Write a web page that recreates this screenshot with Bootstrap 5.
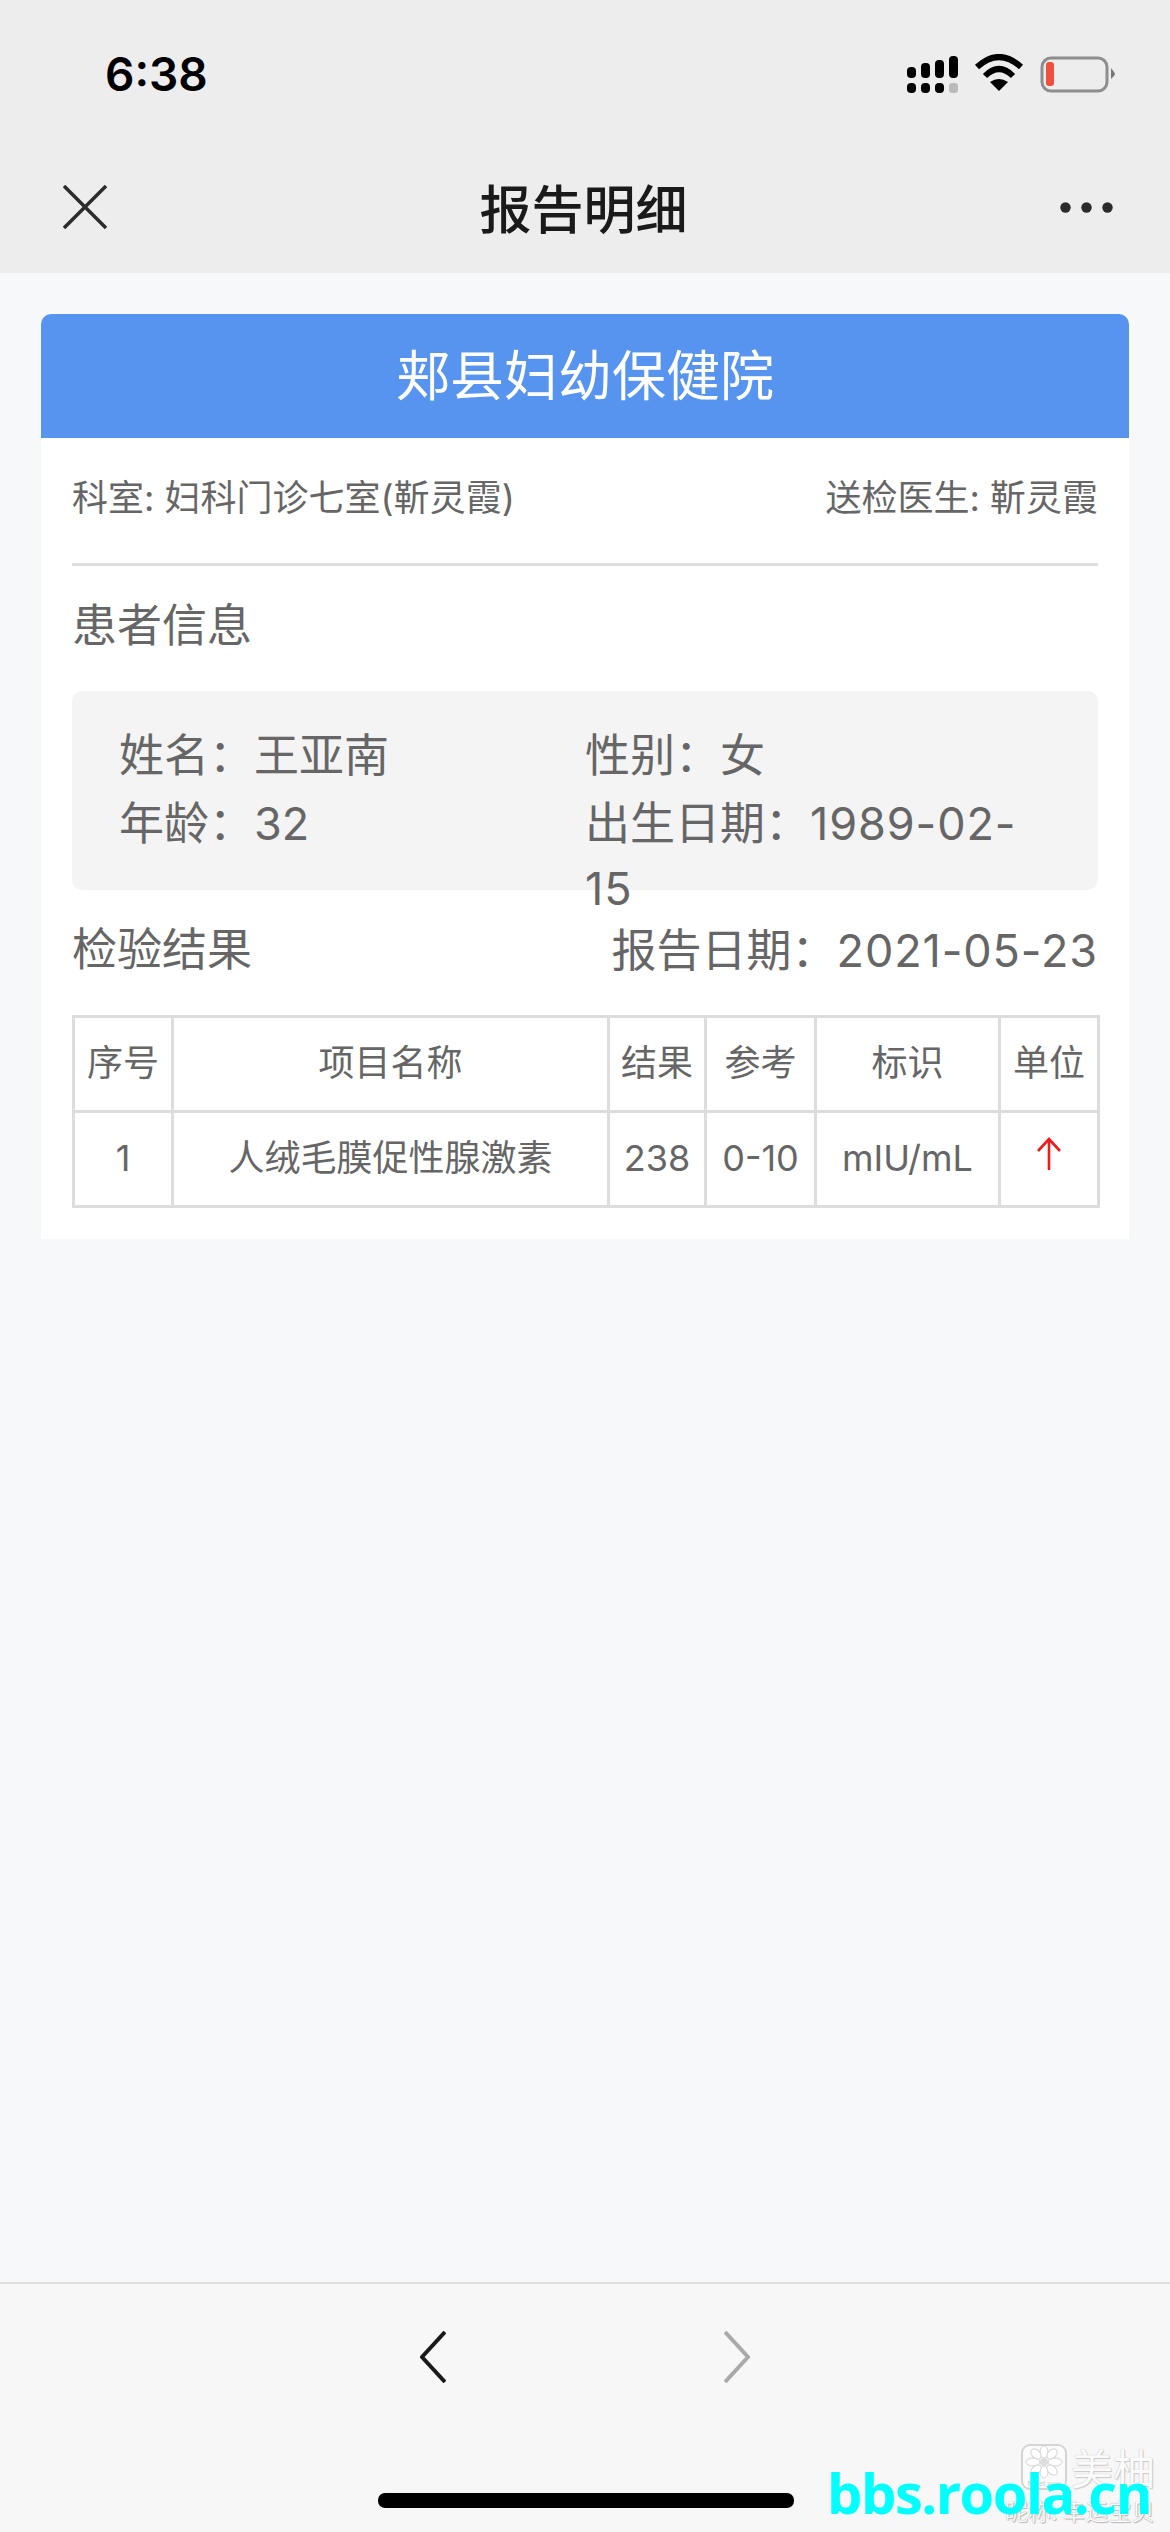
<!DOCTYPE html>
<html lang="zh-CN">
<head>
    <meta charset="UTF-8">
    <meta name="viewport" content="width=device-width, initial-scale=1.0">
    <title>报告明细</title>
    <link href="https://cdn.jsdelivr.net/npm/bootstrap@5.3.0/dist/css/bootstrap.min.css" rel="stylesheet">
    <style>
        body {
            width: 1170px;
            height: 2532px;
            overflow: hidden;
            background: #f7f8fa;
            color: #666;
            font-family: Inter, "Noto Sans CJK SC", sans-serif;
        }
        .app-top { height: 273px; background: #ededed; flex: none; }
        .status-row { height: 148px; padding: 0 55px 0 105px; }
        .status-time { font-size: 46px; font-weight: 600; color: #000; line-height: 1; }
        .nav-row { height: 125px; padding: 0 57px 7px 63px; }
        .nav-title { font-size: 52px; font-weight: 500; color: #1a1a1a; line-height: 1; font-family: "Noto Sans CJK SC", sans-serif; }
        .report-wrap { padding: 41px 41px 0; }
        .report-card { border: 0; border-radius: 10px 10px 0 0; height: 925px; }
        .report-head { height: 124px; background: #5794f0; color: #fff; font-size: 54px; border: 0; padding: 0; border-radius: 10px 10px 0 0 !important; }
        .report-body { padding: 0 31px; }
        .dept-row { border-bottom: 3px solid #ddd; box-sizing: content-box; padding-bottom: 6px; height: 119px; font-size: 36px; }
        .sect-title { font-size: 45px; line-height: 1; }
        .sect-first { height: 125px; padding-top: 37px; }
        .info-box { height: 199px; background: #f4f4f4; border-radius: 10px; padding: 29px 47px 0; font-size: 45px; line-height: 65px; }
        .info-cell { width: 466px; flex: none; }
        .cn-colon { font-family: "Noto Sans CJK TC", sans-serif; }
        .date-val { letter-spacing: 0.9px; }
        .result-row { height: 125px; padding: 35px 0 42px; font-size: 45px; line-height: 1; }
        .lab-table { table-layout: fixed; width: 1025px; margin: 0; border-collapse: collapse; font-size: 36px; color: #666; }
        .lab-table td, .lab-table th { border: 3px solid #ddd; padding: 0 0 2px; height: 95px; text-align: center; vertical-align: middle; font-weight: 400; color: #666; background: #fff; box-shadow: none; }
        .w-no { width: 99px; }
        .w-name { width: 436px; }
        .w-res { width: 97px; }
        .w-ref { width: 110px; }
        .w-flag { width: 184px; }
        .w-unit { width: 99px; }
        .app-bottom { height: 250px; flex: none; margin-top: auto; background: #f7f7f7; border-top: 2px solid #ddd; padding-top: 47px; gap: 278px; }
        .home-bar { left: 378px; top: 2493px; width: 416px; height: 15px; border-radius: 7px; background: #000; }
        .stamp-site { left: 827px; top: 2456px; font-size: 56px; line-height: 72px; font-weight: 700; color: #0ff; font-family: "Open Sans", sans-serif; letter-spacing: -1.5px; }
        .stamp-logo { left: 1021px; top: 2444px; }
        .stamp-brand { left: 1071px; top: 2442px; font-size: 42px; line-height: 50px; color: #fbfbfb; text-shadow: 0 0 1px #aaa, 1px 1px 1px #ccc; font-family: "Noto Sans CJK SC", sans-serif; }
        .stamp-user { left: 1005px; top: 2497px; font-size: 23px; line-height: 26px; color: #fbfbfb; text-shadow: 0 0 1px #999, 1px 1px 1px #bbb; font-family: "Noto Sans CJK SC", sans-serif; }
        .stamp-tiny { font-size: 8px; fill: #ccc; font-family: "Liberation Sans", sans-serif; }
    </style>
</head>
<body class="d-flex flex-column position-relative">
    <!-- barre du haut -->
    <header class="app-top">
        <div class="status-row d-flex align-items-center justify-content-between">
            <span class="status-time">6:38</span>
            <svg width="210" height="40" viewBox="905 54 210 40">
                <g fill="#000">
                    <rect x="907" y="67" width="9" height="11" rx="4"/>
                    <rect x="921" y="63" width="9" height="15" rx="4"/>
                    <rect x="935" y="60" width="9" height="18" rx="4"/>
                    <rect x="949" y="56" width="9" height="22" rx="4"/>
                    <rect x="907" y="83" width="9" height="10" rx="4"/>
                    <rect x="921" y="83" width="9" height="10" rx="4"/>
                    <rect x="935" y="83" width="9" height="10" rx="4"/>
                </g>
                <rect x="949" y="83" width="9" height="10" rx="3" fill="#bbb"/>
                <g fill="none" stroke="#000" stroke-width="6">
                    <path d="M977 67 Q999 47 1021 67"/>
                    <path d="M985 76 Q999 62 1013 76"/>
                </g>
                <path d="M990 82 Q999 76 1008 82 L999 91 Z" fill="#000"/>
                <rect x="1042" y="58" width="65" height="33" rx="9" fill="none" stroke="#8e8e8e" stroke-width="3"/>
                <rect x="1046" y="62" width="8" height="24" rx="3" fill="#ef4f3c"/>
                <path d="M1111 68 Q1115 73 1115 74 Q1115 75 1111 79 Z" fill="#777"/>
            </svg>
        </div>
        <div class="nav-row d-flex align-items-center justify-content-between">
            <svg width="44" height="44" viewBox="0 0 44 44">
                <path d="M1 1 L43 43 M43 1 L1 43" stroke="#2b2b2b" stroke-width="3.5" fill="none"/>
            </svg>
            <span class="nav-title">报告明细</span>
            <svg width="53" height="11" viewBox="0 0 53 11">
                <circle cx="5.5" cy="5.5" r="5.2" fill="#2b2b2b"/>
                <circle cx="26.5" cy="5.5" r="5.2" fill="#2b2b2b"/>
                <circle cx="47.5" cy="5.5" r="5.2" fill="#2b2b2b"/>
            </svg>
        </div>
    </header>

    <!-- contenu du rapport -->
    <main class="report-wrap">
        <div class="card report-card">
            <div class="card-header report-head d-flex align-items-center justify-content-center">郏县妇幼保健院</div>
            <div class="report-body">
                <div class="dept-row d-flex align-items-center justify-content-between">
                    <span>科室: 妇科门诊七室(靳灵霞)</span>
                    <span>送检医生: 靳灵霞</span>
                </div>
                <div class="sect-title sect-first">患者信息</div>
                <div class="info-box">
                    <div class="d-flex">
                        <div class="info-cell">姓名<span class="cn-colon">：</span>王亚南</div>
                        <div class="info-cell">性别<span class="cn-colon">：</span>女</div>
                    </div>
                    <div class="d-flex">
                        <div class="info-cell">年龄<span class="cn-colon">：</span>32</div>
                        <div class="info-cell">出生日期<span class="cn-colon">：</span><span class="date-val">1989-02-15</span></div>
                    </div>
                </div>
                <div class="result-row d-flex align-items-center justify-content-between">
                    <span>检验结果</span>
                    <span>报告日期<span class="cn-colon">：</span><span class="date-val">2021-05-23</span></span>
                </div>
                <table class="table lab-table">
                    <colgroup>
                        <col class="w-no"><col class="w-name"><col class="w-res"><col class="w-ref"><col class="w-flag"><col class="w-unit">
                    </colgroup>
                    <thead>
                        <tr><th>序号</th><th>项目名称</th><th>结果</th><th>参考</th><th>标识</th><th>单位</th></tr>
                    </thead>
                    <tbody>
                        <tr>
                            <td>1</td>
                            <td>人绒毛膜促性腺激素</td>
                            <td>238</td>
                            <td>0-10</td>
                            <td>mIU/mL</td>
                            <td>
                                <svg width="26" height="34" viewBox="0 0 26 34" class="d-block mx-auto mb-2">
                                    <path d="M13 33 V2 M2 14 L13 2 L24 14" stroke="#ee1c1c" stroke-width="2.6" fill="none"/>
                                </svg>
                            </td>
                        </tr>
                    </tbody>
                </table>
            </div>
        </div>
    </main>

    <!-- navigation du bas -->
    <footer class="app-bottom d-flex justify-content-center align-items-start">
        <svg width="26" height="52" viewBox="0 0 26 52">
            <path d="M25 1 L2 26 L25 51" stroke="#1a1a1a" stroke-width="4" fill="none"/>
        </svg>
        <svg width="26" height="52" viewBox="0 0 26 52">
            <path d="M1 1 L24 26 L1 51" stroke="#aaa" stroke-width="4" fill="none"/>
        </svg>
    </footer>

    <div class="home-bar position-absolute"></div>

    <!-- filigranes -->
    <svg class="stamp-logo position-absolute" width="46" height="46" viewBox="0 0 46 46">
        <rect x="1" y="1" width="44" height="44" rx="8" fill="#fbfbfb" stroke="#d4d4d4" stroke-width="2"/>
        <g fill="#fff" stroke="#d4d4d4">
            <ellipse cx="23" cy="8" rx="4" ry="6"/>
            <ellipse cx="23" cy="28" rx="4" ry="6"/>
            <ellipse cx="12" cy="18" rx="7" ry="4"/>
            <ellipse cx="34" cy="18" rx="7" ry="4"/>
            <ellipse cx="15" cy="10" rx="4" ry="6" transform="rotate(-45 15 10)"/>
            <ellipse cx="31" cy="10" rx="4" ry="6" transform="rotate(45 31 10)"/>
            <ellipse cx="15" cy="26" rx="4" ry="6" transform="rotate(45 15 26)"/>
            <ellipse cx="31" cy="26" rx="4" ry="6" transform="rotate(-45 31 26)"/>
        </g>
        <circle cx="23" cy="18" r="4" fill="#ddd"/>
        <text x="23" y="42" text-anchor="middle" class="stamp-tiny">Meet you</text>
    </svg>
    <div class="stamp-brand position-absolute">美柚</div>
    <div class="stamp-user position-absolute">昵称: 幸运宝贝</div>
    <div class="stamp-site position-absolute">bbs.roola.cn</div>
</body>
</html>
